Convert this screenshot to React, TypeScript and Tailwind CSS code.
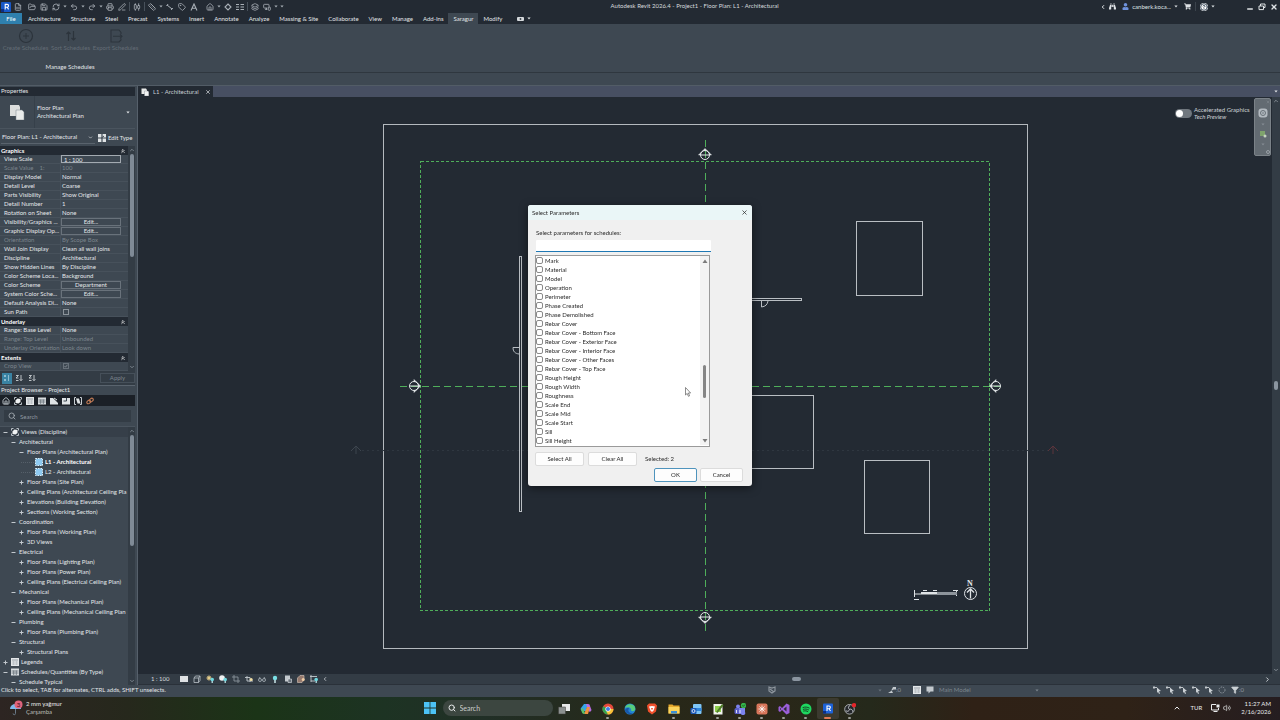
import React, { useState } from "react";
import {
  AlignHorizontalDistributeCenter,
  ChevronDown,
  ChevronLeft,
  ChevronRight,
  ChevronUp,
  ChevronsUp,
  CircleHelp,
  FileSpreadsheet,
  FolderOpen,
  Funnel,
  House,
  Layers,
  Minus,
  MonitorSmartphone,
  PenLine,
  Printer,
  Redo2,
  RefreshCw,
  Ruler,
  Save,
  Search,
  Tag,
  Undo2,
  Volume2,
  X,
} from "lucide-react";
import { FaBinoculars, FaShoppingCart, FaUser } from "react-icons/fa";

type IconType = React.ComponentType<{ className?: string; strokeWidth?: number }>;

const Caret = ({ className = "" }: { className?: string }) => (
  <svg viewBox="0 0 4 3" className={`h-[3px] w-1 shrink-0 ${className}`}>
    <path d="M0.4 0.5h3.2L2 2.5z" fill="currentColor" />
  </svg>
);

const Slot = ({ icon: Icon, label }: { icon: IconType; label: string }) => (
  <button aria-label={label} className="flex h-3 w-3 shrink-0 items-center justify-center text-[#a9b0b7]">
    <Icon className="size-2" strokeWidth={2.4} />
  </button>
);

const Drop = ({ label }: { label: string }) => (
  <button aria-label={label} className="flex h-3 w-[6px] shrink-0 items-center justify-center text-[#a9b0b7]">
    <Caret />
  </button>
);

const Rule = () => <span className="mx-[1px] h-[9px] w-px shrink-0 bg-[#48515b]" />;

const RevitLogo = () => (
  <svg viewBox="0 0 10 10" className="size-[10px]">
    <rect x="0" y="0" width="10" height="10" rx="1" fill="#1858c8" />
    <path d="M0 7h3v3H0z" fill="#0c2f86" />
    <path d="M4.2 7.4V2.4h1.9a1.4 1.4 0 0 1 0 2.9H4.2m2 0 1.4 2.1" fill="none" stroke="#fff" strokeWidth="1.1" />
  </svg>
);

function TitleBar() {
  return (
    <header className="flex h-[13px] shrink-0 items-center">
      <nav aria-label="Quick access" className="flex items-center">
        <span className="flex w-3 justify-center">
          <RevitLogo />
        </span>
        <Slot icon={FileSpreadsheet} label="Home" />
        <span className="w-[2px]" />
        <Slot icon={FolderOpen} label="Open" />
        <Slot icon={Save} label="Save" />
        <Slot icon={RefreshCw} label="Synchronize" />
        <Drop label="Synchronize options" />
        <Slot icon={Undo2} label="Undo" />
        <Drop label="Undo history" />
        <Slot icon={Redo2} label="Redo" />
        <Drop label="Redo history" />
        <Slot icon={Printer} label="Print" />
        <Slot icon={PenLine} label="Edit" />
        <Rule />
        <Slot icon={AlignHorizontalDistributeCenter} label="Measure" />
        <Rule />
        <Slot icon={Ruler} label="Dimension" />
        <Drop label="Dimension options" />
        <button aria-label="Aligned dimension" className="flex h-3 w-3 items-center justify-center text-[#a9b0b7]">
          <svg viewBox="0 0 8 8" className="size-2">
            <path d="M1 2l5 4M0.5 3l1.6-2M5.2 7l1.6-2" stroke="currentColor" fill="none" />
          </svg>
        </button>
        <Slot icon={Tag} label="Tag by category" />
        <button aria-label="Text" className="flex h-3 w-3 items-center justify-center text-[#a9b0b7]">
          <svg viewBox="0 0 8 8" className="size-2">
            <path d="M1 7.5 4 1l3 6.5M2.2 5.2h3.6" stroke="currentColor" fill="none" strokeWidth="1.1" />
          </svg>
        </button>
        <span className="w-1" />
        <Slot icon={House} label="Default 3D view" />
        <Drop label="3D view options" />
        <button aria-label="Section" className="flex h-3 w-3 items-center justify-center text-[#a9b0b7]">
          <svg viewBox="0 0 8 8" className="size-2">
            <path d="M4 1 7 4 4 7 1 4z" stroke="currentColor" fill="none" strokeWidth="1.1" />
          </svg>
        </button>
        <button aria-label="Thin lines" className="flex h-3 w-3 items-center justify-center text-[#a9b0b7]">
          <svg viewBox="0 0 8 8" className="size-2">
            <path d="M0 1.5h3M4.5 1.5H8M0 4h3M4.5 4H8M0 6.5h3M4.5 6.5H8" stroke="currentColor" />
          </svg>
        </button>
        <Rule />
        <Slot icon={Layers} label="Close inactive views" />
        <Slot icon={MonitorSmartphone} label="Switch windows" />
        <Drop label="Switch windows options" />
        <Drop label="Customize toolbar" />
      </nav>
      <h1 className="grow pb-[2px] pl-1 text-center leading-[8px] text-[#d6dade]">
        Autodesk Revit 2026.4 - Project1 - Floor Plan: L1 - Architectural
      </h1>
      <div className="flex items-center text-[#dfe3e6]">
        <ChevronLeft className="size-[6px]" strokeWidth={4} />
        <FaBinoculars className="ml-[3px] size-[7px]" />
        <FaUser className="ml-[6px] size-[7px] text-[#6f93dd]" />
        <button className="ml-[3px] flex items-center gap-[3px] text-[6px] leading-[8px]">
          canberk.koca...
          <Caret />
        </button>
        <FaShoppingCart className="ml-[6px] size-[7px]" />
        <span className="mx-[4px] h-[9px] w-px bg-[#3b434c]" />
        <CircleHelp className="size-2 rounded-full bg-white text-[#3b4a5a]" strokeWidth={3} />
        <Caret className="ml-[3px]" />
        <button aria-label="Minimize" className="ml-[31px] flex h-2 items-end">
          <Minus className="-mb-[2px] size-2" strokeWidth={4} />
        </button>
        <button aria-label="Restore" className="ml-[4px]">
          <svg viewBox="0 0 8 8" className="size-2">
            <path d="M2.5 3V1H7v3.5H5.5M1 3h4.5v3.6H1z" fill="none" stroke="currentColor" />
          </svg>
        </button>
        <button aria-label="Close" className="ml-[4px] mr-[2px]">
          <X className="size-2" strokeWidth={4} />
        </button>
      </div>
    </header>
  );
}

const ribbonTabs = [
  "Architecture", "Structure", "Steel", "Precast", "Systems", "Insert", "Annotate", "Analyze",
  "Massing & Site", "Collaborate", "View", "Manage", "Add-Ins", "Saragur", "Modify",
];

function RibbonTabs() {
  return (
    <nav aria-label="Ribbon tabs" className="flex h-[11px] shrink-0 items-stretch leading-[10px] text-[#e2e5e8]">
      <button className="mr-px w-[22px] bg-[#2f80ae] text-white">File</button>
      {ribbonTabs.map((t) => (
        <button key={t} className={t === "Saragur" ? "bg-[#3e4852] px-[5px]" : "px-[5px]"}>
          {t}
        </button>
      ))}
      <button aria-label="Ribbon display" className="ml-[10px] flex items-center gap-[3px]">
        <svg viewBox="0 0 7 4" className="h-1 w-[7px]">
          <rect width="7" height="4" rx="1" fill="#d5d9dc" />
          <circle cx="3.5" cy="2" r="0.9" fill="#3a424b" />
        </svg>
        <Caret />
      </button>
    </nav>
  );
}

function Ribbon() {
  return (
    <section aria-label="Ribbon" className="flex h-[49px] shrink-0 flex-col border-b border-[#2f373f] bg-[#3e4852]">
      <div className="flex gap-[3px] pl-[3px] pt-[4px] leading-[8px] text-[#646d76]">
        <button className="flex w-[45px] flex-col items-center whitespace-nowrap">
          <svg viewBox="0 0 16 16" className="size-4 text-[#2c343c]">
            <circle cx="8" cy="8" r="6.5" fill="none" stroke="currentColor" strokeWidth="1.2" />
            <path d="M8 5v6M5 8h6" stroke="currentColor" />
          </svg>
          Create Schedules
        </button>
        <button className="flex w-[39px] flex-col items-center whitespace-nowrap">
          <svg viewBox="0 0 16 16" className="size-4 text-[#2c343c]">
            <path d="M5.5 13V4M3.5 6l2-2 2 2M10.5 3v9M8.5 10l2 2 2-2" fill="none" stroke="currentColor" strokeWidth="1.2" />
          </svg>
          Sort Schedules
        </button>
        <button className="flex w-[45px] flex-col items-center whitespace-nowrap">
          <svg viewBox="0 0 16 16" className="size-4 text-[#2c343c]">
            <path d="M13 6V4.5L11 2H3v12h8l2-2v-1.5M5 8.3h9M12 6.3l2 2-2 2" fill="none" stroke="currentColor" strokeWidth="1.1" />
          </svg>
          Export Schedules
        </button>
      </div>
      <p className="mt-auto w-[140px] pb-[1px] text-center leading-[8px] text-[#e2e5e8]">Manage Schedules</p>
    </section>
  );
}

type Prop = { name: string; value?: string; kind?: "button" | "box" | "check"; off?: boolean; extra?: string };
const groups: { title: string; rows: Prop[] }[] = [
  {
    title: "Graphics",
    rows: [
      { name: "View Scale", value: "1 : 100", kind: "box" },
      { name: "Scale Value", extra: "1:", value: "100", off: true },
      { name: "Display Model", value: "Normal" },
      { name: "Detail Level", value: "Coarse" },
      { name: "Parts Visibility", value: "Show Original" },
      { name: "Detail Number", value: "1" },
      { name: "Rotation on Sheet", value: "None" },
      { name: "Visibility/Graphics ...", value: "Edit...", kind: "button" },
      { name: "Graphic Display Op...", value: "Edit...", kind: "button" },
      { name: "Orientation", value: "By Scope Box", off: true },
      { name: "Wall Join Display", value: "Clean all wall joins" },
      { name: "Discipline", value: "Architectural" },
      { name: "Show Hidden Lines", value: "By Discipline" },
      { name: "Color Scheme Loca...", value: "Background" },
      { name: "Color Scheme", value: "Department", kind: "button" },
      { name: "System Color Sche...", value: "Edit...", kind: "button" },
      { name: "Default Analysis Di...", value: "None" },
      { name: "Sun Path", kind: "check" },
    ],
  },
  {
    title: "Underlay",
    rows: [
      { name: "Range: Base Level", value: "None" },
      { name: "Range: Top Level", value: "Unbounded", off: true },
      { name: "Underlay Orientation", value: "Look down", off: true },
    ],
  },
  { title: "Extents", rows: [{ name: "Crop View", kind: "check", off: true }] },
];

function PropValue({ row }: { row: Prop }) {
  if (row.kind === "button")
    return <button className="block h-2 w-[60px] border border-[#69727b] text-center leading-[6px]">{row.value}</button>;
  if (row.kind === "box")
    return (
      <input
        aria-label={row.name}
        defaultValue={row.value}
        className="block h-2 w-[60px] border border-[#a3aab1] bg-transparent pl-[2px] leading-[6px] outline-none"
      />
    );
  if (row.kind === "check")
    return (
      <span className="relative ml-[2px] block size-[6px]">
        <input
          type="checkbox"
          aria-label={row.name}
          defaultChecked={row.off}
          disabled={row.off}
          className="block size-[6px] appearance-none border border-[#8b939a] disabled:border-[#68717a]"
        />
        {row.off && (
          <svg viewBox="0 0 6 6" className="pointer-events-none absolute inset-0 size-[6px]">
            <path d="M1.5 3l1 1.2 2-2.5" fill="none" stroke="#8b939a" strokeWidth="0.8" />
          </svg>
        )}
      </span>
    );
  return <span className="pl-px">{row.value}</span>;
}

function Scrollbar({ thumb }: { thumb: string }) {
  return (
    <div className="flex w-[7px] shrink-0 flex-col items-center bg-[#333c45] text-[#8f98a1]">
      <ChevronUp className="my-px size-[6px] shrink-0" strokeWidth={3} />
      <div className="flex min-h-0 w-full grow justify-center">
        <span className={`w-1 rounded-full bg-[#7f8a96] ${thumb}`} />
      </div>
      <ChevronDown className="my-px size-[6px] shrink-0" strokeWidth={3} />
    </div>
  );
}

function Properties() {
  return (
    <section aria-label="Properties" className="flex shrink-0 flex-col">
      <h2 className="mt-px h-[9px] bg-[#232a33] pl-px leading-[8px] text-[#e2e5e8]">Properties</h2>
      <div className="flex h-[33px] items-center border-b border-[#4a545e]">
        <span className="flex h-full w-[35px] items-center justify-center border-r border-[#36404a]">
          <svg viewBox="0 0 16 16" className="size-4">
            <path d="M1 1h9l1 2v9H1z" fill="#dcdedd" />
            <path d="M7 6h6l2 2v8H7z" fill="#e9ebea" stroke="#7b828a" strokeWidth="0.5" />
          </svg>
        </span>
        <p className="pl-[2px] leading-[8px]">
          Floor Plan
          <br />
          Architectural Plan
        </p>
        <Caret className="ml-auto mr-[5px]" />
      </div>
      <div className="flex h-[17px] items-center">
        <button className="ml-px flex h-[13px] w-[94px] items-center justify-between border-b border-[#59636d] pl-px pr-[2px]">
          Floor Plan: L1 - Architectural
          <ChevronDown className="size-[5px]" strokeWidth={3} />
        </button>
        <button className="ml-[3px] flex items-center gap-[2px]">
          <svg viewBox="0 0 8 8" className="size-2">
            <path d="M0 0h3.4v3.4H0zM4.6 0H8v3.4H4.6zM0 4.6h3.4V8H0zM4.6 4.6H8V8H4.6z" fill="#dfe3e5" />
            <path d="M3 4.5 6 2" stroke="#48525c" />
          </svg>
          Edit Type
        </button>
      </div>
      <div className="flex">
        <div className="min-w-0 grow">
          {groups.map((g) => (
            <React.Fragment key={g.title}>
              <h3 className="flex h-[9px] items-center justify-between bg-[#232a33] pl-[1px] pr-[2px] font-bold leading-[8px] text-white">
                {g.title}
                <ChevronsUp className="size-[6px]" strokeWidth={3} />
              </h3>
              <table className="w-full table-fixed border-collapse">
                <tbody>
                  {g.rows.map((r) => (
                    <tr key={r.name} className={r.off ? "h-[9px] text-[#7c858d]" : "h-[9px]"}>
                      <th scope="row" className="w-[61px] whitespace-nowrap p-0 pb-px pl-1 text-left font-normal leading-[8px] shadow-[inset_-1px_-1px_0_#47515b]">
                        {r.name}
                        {r.extra && <span className="pl-[6px]">{r.extra}</span>}
                      </th>
                      <td className="whitespace-nowrap p-0 pb-px leading-[8px] shadow-[inset_0_-1px_0_#47515b]">
                        <PropValue row={r} />
                      </td>
                    </tr>
                  ))}
                </tbody>
              </table>
            </React.Fragment>
          ))}
        </div>
        <Scrollbar thumb="h-[103px]" />
      </div>
      <div className="flex h-[15px] items-center gap-px border-b border-[#5a646e] bg-[#333c45] pl-[2px]">
        <button aria-label="Group by category" className="flex h-[11px] w-[10px] items-center justify-center bg-[#3a83a3]">
          <svg viewBox="0 0 8 8" className="size-2">
            <path d="M1 2h2M5 2h1M1 6h2M5 6h1M5 4h1" stroke="#e3f2f9" />
          </svg>
        </button>
        {["Sort ascending", "Sort descending"].map((l) => (
          <button key={l} aria-label={l} className="flex h-[11px] w-3 items-center justify-center">
            <svg viewBox="0 0 8 8" className="size-2">
              <path d="M1 1.5h2.5L1 4h2.5M1 6.5h2.5M6 1v5.5M4.6 5.2 6 6.7l1.4-1.5" fill="none" stroke="#ccd1d5" strokeWidth="0.9" />
            </svg>
          </button>
        ))}
        <button className="ml-auto h-[10px] w-[35px] border border-[#46505a] leading-[8px] text-[#7c858d]">Apply</button>
      </div>
    </section>
  );
}

const SheetGlyph = () => (
  <svg viewBox="0 0 8 8" className="size-2 shrink-0">
    <path d="M0.5 2.5v-2h2M5.5 0.5h2v2M7.5 5.5v2h-2M2.5 7.5h-2v-2" fill="none" stroke="#b9c0c6" />
    <path d="M3.5 1.5 6.5 2v3L4.5 6.5 1.5 6V3.2z" fill="#f1f3f4" />
  </svg>
);
const TableGlyph = () => (
  <svg viewBox="0 0 8 8" className="size-2 shrink-0">
    <path d="M0 0.5h8v7H0z" fill="#d8dcdf" />
    <path d="M0.5 3h7M0.5 5h7M2.7 2.5V7M5.3 2.5V7" stroke="#59636c" strokeWidth="0.7" />
  </svg>
);
const LegendGlyph = () => (
  <svg viewBox="0 0 8 8" className="size-2 shrink-0">
    <path d="M0 0h8v8H0z" fill="#e4e7e9" />
    <path d="M1 2h6M1.5 4h2M4.5 4h2M1.5 6h2M4.5 6h2" stroke="#77808a" strokeWidth="0.7" />
  </svg>
);
const PlanGlyph = () => (
  <svg viewBox="0 0 8 8" className="size-2 shrink-0">
    <rect x="0.5" y="0.5" width="7" height="7" fill="#8fcbf2" stroke="#d9eefb" strokeDasharray="1.5 1" />
  </svg>
);

type Node = { d: number; s: "-" | "+" | ""; t: string; icon?: React.ReactNode; bold?: boolean };
const tree: Node[] = [
  { d: 0, s: "-", t: "Views (Discipline)", icon: <SheetGlyph /> },
  { d: 1, s: "-", t: "Architectural" },
  { d: 2, s: "-", t: "Floor Plans (Architectural Plan)" },
  { d: 3, s: "", t: "L1 - Architectural", icon: <PlanGlyph />, bold: true },
  { d: 3, s: "", t: "L2 - Architectural", icon: <PlanGlyph /> },
  { d: 2, s: "+", t: "Floor Plans (Site Plan)" },
  { d: 2, s: "+", t: "Ceiling Plans (Architectural Ceiling Pla" },
  { d: 2, s: "+", t: "Elevations (Building Elevation)" },
  { d: 2, s: "+", t: "Sections (Working Section)" },
  { d: 1, s: "-", t: "Coordination" },
  { d: 2, s: "+", t: "Floor Plans (Working Plan)" },
  { d: 2, s: "+", t: "3D Views" },
  { d: 1, s: "-", t: "Electrical" },
  { d: 2, s: "+", t: "Floor Plans (Lighting Plan)" },
  { d: 2, s: "+", t: "Floor Plans (Power Plan)" },
  { d: 2, s: "+", t: "Ceiling Plans (Electrical Ceiling Plan)" },
  { d: 1, s: "-", t: "Mechanical" },
  { d: 2, s: "+", t: "Floor Plans (Mechanical Plan)" },
  { d: 2, s: "+", t: "Ceiling Plans (Mechanical Ceiling Plan" },
  { d: 1, s: "-", t: "Plumbing" },
  { d: 2, s: "+", t: "Floor Plans (Plumbing Plan)" },
  { d: 1, s: "-", t: "Structural" },
  { d: 2, s: "+", t: "Structural Plans" },
  { d: 0, s: "+", t: "Legends", icon: <LegendGlyph /> },
  { d: 0, s: "-", t: "Schedules/Quantities (By Type)", icon: <TableGlyph /> },
  { d: 1, s: "-", t: "Schedule Typical" },
];
const indents = ["pl-[3px]", "pl-[11px]", "pl-[19px]", "pl-[26px]"];

function ProjectBrowser() {
  return (
    <section aria-label="Project Browser" className="flex min-h-0 grow flex-col">
      <h2 className="h-[9px] shrink-0 pl-px leading-[8px] text-[#e2e5e8]">Project Browser - Project1</h2>
      <div className="flex h-[11px] shrink-0 items-center gap-1 bg-[#1b2027] pl-[2px]">
        <House className="size-2 text-[#b9c0c6]" strokeWidth={3} />
        <SheetGlyph />
        <LegendGlyph />
        <TableGlyph />
        <svg viewBox="0 0 8 8" className="size-2">
          <path d="M0 1h3l5 5v1.5H0z" fill="#dfe3e5" />
          <path d="M4 1l3 2" stroke="#dfe3e5" />
        </svg>
        <svg viewBox="0 0 8 8" className="size-2">
          <path d="M0 1h8v6.5H0z" fill="#dfe3e5" />
          <path d="M4.5 1v3H1.5" stroke="#3b444d" fill="none" />
        </svg>
        <svg viewBox="0 0 8 8" className="size-2">
          <path d="M2 0.5H0.5v7H2M6 0.5h1.5v7H6" fill="none" stroke="#c6ccd1" />
          <path d="M2 1.5h3l1.5 5h-3z" fill="#dfe3e5" />
        </svg>
        <svg viewBox="0 0 8 8" className="size-2">
          <g fill="none" stroke="#c07a55" strokeWidth="1.1">
            <ellipse cx="2.7" cy="5" rx="2" ry="1.5" transform="rotate(-40 2.7 5)" />
            <ellipse cx="5.4" cy="3" rx="2" ry="1.5" transform="rotate(-40 5.4 3)" />
          </g>
        </svg>
      </div>
      <div className="shrink-0 border-b border-[#4a545e] bg-[#3e4852] px-1 pb-[4px] pt-[4px]">
        <label className="flex h-3 items-center gap-1 bg-[#333c45] pl-1 text-[#aab1b8]">
          <Search className="size-2" strokeWidth={2.4} />
          <input
            placeholder="Search"
            aria-label="Search project browser"
            className="h-[10px] min-w-0 grow bg-transparent outline-none placeholder:text-[#9199a1]"
          />
        </label>
      </div>
      <div className="flex min-h-0 grow">
        <ul className="min-h-0 min-w-0 grow basis-0 overflow-hidden">
          {tree.map((n, i) => (
            <li
              key={i}
              className={`flex h-[10px] items-center whitespace-nowrap leading-[10px] ${indents[n.d]} ${i === 0 ? "bg-[#363f49]" : ""}`}
            >
              {n.s ? (
                <svg viewBox="0 0 5 5" className="mr-[3px] size-[5px] shrink-0">
                  <path d={n.s === "-" ? "M0.5 2.5h4" : "M0.5 2.5h4M2.5 0.5v4"} stroke="#c3c9ce" />
                </svg>
              ) : (
                <span className="ml-[-5px] mr-px w-[13px] shrink-0 border-b border-dotted border-[#56606a]" />
              )}
              {n.icon && <span className="mr-[2px]">{n.icon}</span>}
              <span className={n.bold ? "font-bold text-white" : ""}>{n.t}</span>
            </li>
          ))}
        </ul>
        <Scrollbar thumb="h-[111px]" />
      </div>
    </section>
  );
}

const Elevation = ({ x, y, points }: { x: number; y: number; points: string }) => (
  <g transform={`translate(${x} ${y})`} stroke="#e4e8ea" fill="none" strokeWidth="1">
    <circle r="4.5" />
    <path d="M-4 0h8" />
    <path d={points} fill="#e4e8ea" strokeWidth="0.5" />
  </g>
);

function Drawing() {
  return (
    <svg role="img" aria-label="Floor plan L1" viewBox="138 97 1134 577" preserveAspectRatio="xMidYMid meet" className="absolute inset-0 size-full">
      <g fill="none" shapeRendering="crispEdges">
        <rect x="383.5" y="124.5" width="644" height="524" stroke="#b4b9be" />
        <rect x="420.5" y="161.5" width="569" height="449" stroke="#4fae5a" strokeDasharray="3 2" />
        <path d="M705.5 140V632" stroke="#4fae5a" strokeDasharray="7 4" />
        <path d="M400 386.5H1004" stroke="#4fae5a" strokeDasharray="7 4" />
        <path d="M362 450.5H1048" stroke="#2f3740" strokeDasharray="2 3" />
        <g stroke="#b9bec3">
          <rect x="856.5" y="221.5" width="66" height="74" />
          <rect x="864.5" y="460.5" width="65" height="73" />
          <rect x="740.5" y="395.5" width="73" height="73" />
          <path d="M519.5 256v255h2V256zM740 298.5h61v2h-61" />
        </g>
      </g>
      <g fill="none" stroke="#b9bec3">
        <path d="M519 347.5h-6c0 4 2 6 6 6.5M761.5 301v6c4-.5 6-2.5 6.5-6" />
        <path d="M351 451l5-5 5 5M356 446v8" stroke="#3d454e" />
        <path d="M1048 451l5-5 5 5M1053 446v8" stroke="#5c343c" />
      </g>
      <Elevation x={705} y={155} points="M-6.5 0 0 -6.5 6.5 0 4.5 0A4.5 4.5 0 0 0 -4.5 0z" />
      <Elevation x={705} y={617} points="M-6.5 0 0 6.5 6.5 0 4.5 0A4.5 4.5 0 0 1 -4.5 0z" />
      <Elevation x={414} y={386} points="M0 -6.5 6.5 0 0 6.5 0 4.5A4.5 4.5 0 0 0 0 -4.5z" />
      <Elevation x={996} y={386} points="M0 -6.5 -6.5 0 0 6.5 0 4.5A4.5 4.5 0 0 1 0 -4.5z" />
      <g stroke="#dfe3e6" fill="none">
        <circle cx="970.5" cy="593.5" r="6" />
        <path d="M970.5 598.5v-9M967 592.5l3.5-3.5 3.5 3.5" strokeWidth="1.3" />
        <path d="M914.5 590v7M914 594h43M923 590.5h4M933 590.5h4M953 590.5h5M956.5 591v5M914 599.5h5" />
        <path d="M921 593h16" strokeWidth="2" />
        <path d="M937 593.5h20" strokeWidth="3" stroke="#8d949b" />
      </g>
      <text x="970" y="585.5" textAnchor="middle" fill="#e4e8ea" fontSize="8" fontWeight="bold" fontFamily="'Liberation Serif', serif">
        N
      </text>
    </svg>
  );
}

const Bulb = () => (
  <>
    <circle cx="6.2" cy="4.5" r="1.8" fill="#6fd8e0" />
    <path d="M6.2 6v2" stroke="#bfeef2" strokeWidth="1.2" />
  </>
);

const viewControls: { label: string; art: React.ReactNode }[] = [
  { label: "Detail level", art: <path d="M0 1h8v6H0z" fill="#dfe2e4" /> },
  { label: "Visual style", art: <path d="M1 3h4.5v4.5H1zM1 3l1.5-2H7v4.5l-1.5 2M5.5 3 7 1" fill="none" stroke="#b9c0c6" strokeWidth="0.8" /> },
  { label: "Sun path", art: <><circle cx="3" cy="3" r="1.7" fill="#f0dfa6" /><path d="M3 0v6M0 3h6M1 1l4 4M5 1 1 5" stroke="#e3c77f" strokeWidth="0.6" /><Bulb /></> },
  { label: "Shadows", art: <><circle cx="3" cy="3" r="2.8" fill="#f0f2f3" /><Bulb /></> },
  { label: "Crop view", art: <path d="M2 0v6h6M0 2h6v6" fill="none" stroke="#89929a" strokeWidth="0.9" /> },
  { label: "Show crop region", art: <><path d="M2 1v5h6M0 2.5h5V7" fill="none" stroke="#c3c9ce" strokeWidth="0.9" /><circle cx="6.2" cy="4.5" r="1.5" fill="#f0dfa6" /></> },
  { label: "Temporary hide", art: <path d="M0.5 5a1.5 1.5 0 1 0 3 0 1.5 1.5 0 1 0-3 0M4.5 5a1.5 1.5 0 1 0 3 0 1.5 1.5 0 1 0-3 0M1 4l1-2M7 4 6 2" fill="none" stroke="#a2aab1" strokeWidth="0.9" /> },
  { label: "Reveal hidden elements", art: <><circle cx="4" cy="3" r="2.2" fill="#7be0e6" /><path d="M4 5v3" stroke="#d5f3f5" strokeWidth="1.4" /></> },
  { label: "Temporary view properties", art: <><path d="M1 0.5h5v6H1z" fill="#c3c9ce" /><path d="M4 4h3.5v3.5H4z" fill="#6a737c" stroke="#dfe3e5" strokeWidth="0.6" /></> },
  { label: "Analytical model", art: <><path d="M0.5 3 3 0.5h4V5L5 7.5H0.5z" fill="#94796d" stroke="#c8b7ae" strokeWidth="0.7" /><circle cx="6.2" cy="4.5" r="1.5" fill="#f0cda6" /></> },
  { label: "Reveal constraints", art: <><path d="M1 0v7M0 1.5h7M1 6h4" stroke="#c3c9ce" strokeWidth="0.9" /><Bulb /></> },
];

function Workspace() {
  return (
    <main className="flex min-w-0 grow flex-col border-l border-[#56606b] bg-[#232a33]">
      <div className="flex h-[11px] shrink-0 items-center bg-[#474f62]">
        <button className="flex h-full w-[75px] items-center gap-1 whitespace-nowrap bg-[#232a33] pl-[3px] leading-[10px] text-[#c9ced3]">
          <svg viewBox="0 0 8 8" className="size-2 shrink-0">
            <path d="M0.5 0.5H5L6 2v4H0.5z" fill="#e9ebea" />
            <path d="M3.5 3H7l.8 1v4H3.5z" fill="#f4f5f5" stroke="#7b828a" strokeWidth="0.4" />
          </svg>
          L1 - Architectural
          <X className="ml-auto mr-[2px] size-[6px] shrink-0" strokeWidth={3} />
        </button>
        <Caret className="ml-auto mr-[2px]" />
      </div>
      <div className="flex min-h-0 grow">
        <div className="relative min-w-0 grow">
          <Drawing />
          <div className="absolute right-px top-px flex items-start gap-px">
            <label className="mt-[8px] flex items-center gap-[2px] leading-[7px] text-[#cfd3d7]">
              <span className="relative block h-[9px] w-[17px]">
                <input type="checkbox" role="switch" className="block h-[9px] w-[17px] appearance-none rounded-full bg-[#70777e]" />
                <span className="pointer-events-none absolute left-px top-px size-[7px] rounded-full bg-white" />
              </span>
              <span className="w-[59px]">
                Accelerated Graphics
                <br />
                <i>Tech Preview</i>
              </span>
            </label>
            <div className="flex h-[58px] w-[17px] flex-col items-center justify-between rounded-[2px] border border-[#7b8288] bg-[#636b72] py-px">
              <X className="size-1 self-end text-[#9aa1a7]" />
              <svg viewBox="0 0 10 10" className="size-[10px]">
                <rect x="0.5" y="0.5" width="9" height="9" rx="3" fill="#b3bac0" />
                <circle cx="5" cy="5" r="2.5" fill="none" stroke="#697178" />
                <circle cx="5" cy="5" r="0.8" fill="#697178" />
              </svg>
              <Caret className="text-[#858c93]" />
              <svg viewBox="0 0 8 8" className="size-2">
                <path d="M1 1h5v5H1z" fill="#7fa36d" />
                <circle cx="6" cy="6" r="1.5" fill="#c6d3c1" />
              </svg>
              <Caret className="text-[#858c93]" />
              <span className="size-1 self-end rounded-full border border-[#9aa1a7]" />
            </div>
          </div>
        </div>
        <div className="flex w-2 shrink-0 flex-col items-center justify-between bg-[#333c45] text-[#9aa2aa]">
          <ChevronUp className="mt-px size-[6px]" strokeWidth={3} />
          <span className="h-[9px] w-1 rounded-full bg-[#8b95a0]" />
          <ChevronDown className="mb-px size-[6px]" strokeWidth={3} />
        </div>
      </div>
      <div className="flex h-[11px] shrink-0 items-center border-b border-[#2a3139] bg-[#333c45] text-[#d6dade]">
        <span className="w-[39px] pl-[13px] leading-[10px]">1 : 100</span>
        {viewControls.map((v) => (
          <button key={v.label} aria-label={v.label} className="flex h-[10px] w-[13px] items-center justify-center">
            <svg viewBox="0 0 8 8" className="size-2">
              {v.art}
            </svg>
          </button>
        ))}
        <ChevronLeft className="ml-[2px] size-[6px]" strokeWidth={3} />
        <div className="flex grow justify-center">
          <span className="h-1 w-[9px] rounded-full bg-[#8b95a0]" />
        </div>
        <ChevronRight className="mr-[9px] size-[7px]" strokeWidth={3} />
      </div>
    </main>
  );
}

function StatusBar() {
  return (
    <footer className="flex h-[12px] shrink-0 items-center bg-[#3e4852] pb-[2px] leading-[8px] text-[#e2e5e8]">
      <p className="grow pl-px">Click to select, TAB for alternates, CTRL adds, SHIFT unselects.</p>
      <svg viewBox="0 0 8 8" className="size-2 text-[#8d959d]">
        <path d="M1 1l3 1 3-1v4L4 7 1 5zM2 3l4 3" fill="none" stroke="currentColor" strokeWidth="1.2" />
      </svg>
      <Caret className="ml-[102px] text-[#69727b]" />
      <svg viewBox="0 0 8 8" className="ml-[6px] size-2">
        <path d="M0 7h5L3.5 4 5 1h3v2.5H5.5" fill="#c3c9ce" />
      </svg>
      <span className="text-[#8d959d]">:0</span>
      <span className="ml-3 flex gap-[5px]">
        <LegendGlyph />
        <svg viewBox="0 0 8 8" className="size-2">
          <path d="M0.5 0.5h7v5h-3l-2 2v-2h-2z" fill="#c3c9ce" />
        </svg>
      </span>
      <button className="ml-[5px] flex w-[100px] items-center justify-between text-[#7c858d]">
        Main Model
        <Caret />
      </button>
      <div className="ml-[114px] flex items-center gap-[5px] text-[#ccd1d5]">
        {["Select links", "Select underlay elements", "Select pinned elements", "Select elements by face", "Drag elements on selection"].map((l) => (
          <button key={l} aria-label={l} className="flex items-center justify-center">
            <svg viewBox="0 0 8 8" className="size-2">
              <path d="M0 1.5h4M1 0v3" stroke="currentColor" strokeWidth="0.9" />
              <path d="M4 1.5 8 5 6 5.2 7 7.5 6 8 5 5.8 4 7z" fill="currentColor" />
            </svg>
          </button>
        ))}
        <svg viewBox="0 0 8 8" className="size-2">
          <circle cx="4" cy="4" r="3" fill="none" stroke="#8d959d" strokeDasharray="1.5 1" />
        </svg>
        <span className="flex items-center">
          <Funnel className="size-2 fill-current" />
          <span className="text-[#8d959d]">:0</span>
        </span>
      </div>
      <span className="w-[36px]" />
    </footer>
  );
}

const taskApps: { label: string; running?: boolean; active?: boolean; art: React.ReactNode }[] = [
  { label: "Task view", art: <><rect x="4" y="1" width="8" height="7" fill="#e8eaea" /><rect x="0.5" y="4" width="7" height="7" fill="#8b908f" stroke="#3a3a36" strokeWidth="0.5" /></> },
  { label: "Copilot", art: <><path d="M4 1h4l-2 7H2.5A2 2 0 0 1 1 5z" fill="#35a5e8" /><path d="M8 1a2 2 0 0 1 2 2l1.5 4A2 2 0 0 1 9 8.5L7 4 6 1z" fill="#b86ae0" /><path d="M4 11h4l2-7H7z" fill="#f0923f" /><path d="M1 6l2-1 2 5-1 1c-2 0-2.5-3-3-5z" fill="#5ac06a" /></> },
  { label: "Chrome", running: true, art: <><circle cx="6" cy="6" r="5.5" fill="#e5483a" /><path d="M6 6 1.2 3.2A5.5 5.5 0 0 0 6 11.5z" fill="#33a350" /><path d="M6 6h5.5A5.5 5.5 0 0 1 6 11.5L4.5 9z" fill="#f6c338" /><circle cx="6" cy="6" r="2.6" fill="#fff" /><circle cx="6" cy="6" r="2" fill="#3f7de8" /></> },
  { label: "Edge", art: <><circle cx="6" cy="6" r="5.5" fill="#2383d2" /><path d="M1 5a5.3 5.3 0 0 1 10.3 1c0 2-3 3-4.3 1.5C8 5 4 3 1 5z" fill="#56cc7c" /><path d="M5 5.5C3 8 5.5 11 9.5 10A5.5 5.5 0 0 1 1 8c0-3 3-3.5 4-2.5z" fill="#1857a8" /></> },
  { label: "Brave", art: <><path d="M3 0.5h6l2 2-1 6L6 11.5 2 8.5l-1-6z" fill="#f0502c" /><path d="M3 3.5 6 3l3 .5-1.5 4L6 9 4.5 7.5z" fill="#fff" /><path d="M5 5l1 2.5L7 5z" fill="#f0502c" /></> },
  { label: "File Explorer", running: true, art: <><path d="M0.5 1.5h4l1 1h6v8h-11z" fill="#e6a92d" /><path d="M0.5 4h11v6.5h-11z" fill="#fbd45c" /><path d="M3 8h6v2.5H3z" fill="#3c8fd6" /></> },
  { label: "Outlook", art: <><rect x="3" y="1" width="8.5" height="10" rx="1" fill="#7ec5f5" /><path d="M3 5h8.5v3H3z" fill="#2f86dc" /><rect x="0.5" y="5" width="6" height="6" rx="1" fill="#1b58b7" /><circle cx="3.5" cy="8" r="1.5" fill="none" stroke="#fff" strokeWidth="0.8" /></> },
  { label: "Notepad++", running: true, art: <><path d="M1.5 1h9v10.5h-9z" fill="#f1f3ec" /><path d="M3 3h6v6H3z" fill="#8fce4c" /><path d="M4 9l6-8 1.5 1.5L5.5 10z" fill="#4f7d2a" /></> },
  { label: "Teams", running: true, art: <><circle cx="4" cy="3.5" r="2" fill="#7c83ee" /><rect x="0.5" y="5" width="8" height="6" rx="1.5" fill="#5b5fc7" /><path d="M5 5h6v4a2 2 0 0 1-4 2H5z" fill="#7c83ee" /><path d="M2.5 7v3M6 7v3" stroke="#fff" strokeWidth="0.8" /><circle cx="9.5" cy="2.5" r="2.7" fill="#35b34a" /><path d="M8.4 2.5l.9.9 1.5-1.7" stroke="#10351a" strokeWidth="0.7" fill="none" /></> },
  { label: "Claude", running: true, art: <><rect x="0.5" y="0.5" width="11" height="11" rx="2" fill="#d8765a" /><path d="M6 2.5v7M2.5 6h7M3.5 3.5l5 5M8.5 3.5l-5 5" stroke="#fff" strokeWidth="0.8" /></> },
  { label: "Visual Studio", running: true, art: <><path d="M8.5 0.5 11.5 2v8l-3 1.5L4 7 2 9 .5 8V4L2 3l2 2z" fill="#9b5fd8" /><path d="M8.5 3.5v5L5.5 6zM2 4.8v2.4L3.2 6z" fill="#30283a" /></> },
  { label: "Spotify", running: true, art: <><circle cx="6" cy="6" r="5.5" fill="#1ed760" /><path d="M3 4.5c2-.8 4.5-.5 6.2.5M3.3 6.3c1.8-.6 3.7-.3 5.2.5M3.6 8c1.5-.4 3-.2 4.2.5" fill="none" stroke="#123a1e" strokeWidth="0.9" strokeLinecap="round" /></> },
  { label: "Revit", running: true, active: true, art: <><rect x="1" y="0.5" width="10" height="10" rx="1" fill="#1d62d8" /><path d="M1 8h3v2.5H1z" fill="#0c2f86" /><path d="M5 8V3h2a1.3 1.3 0 0 1 0 2.7H5m2 0L8.5 8" fill="none" stroke="#fff" strokeWidth="1.1" /></> },
  { label: "OBS", running: true, art: <><circle cx="5.5" cy="6.3" r="4.8" fill="#23262a" stroke="#c9cdd0" strokeWidth="0.8" /><path d="M5.5 6.3c-1.5-1-1.5-3 .5-3.8M5.5 6.3c-.2 1.8-2 2.6-3.6 1.5M5.5 6.3c1.7-.7 3.3.5 3.1 2.4" stroke="#c9cdd0" strokeWidth="0.9" fill="none" /><circle cx="10" cy="2.2" r="2.2" fill="#e5252a" /></> },
];

function Taskbar() {
  return (
    <footer className="grid h-[23px] shrink-0 grid-cols-[1fr_auto_1fr] items-center bg-[linear-gradient(90deg,#2d2522_0%,#26281c_10%,#1b3417_20%,#1d3323_30%,#212f26_38%,#272819_50%,#2a2718_60%,#25291b_68%,#2f2116_76%,#2f2217_88%,#251d20_100%)] text-[#e9ebec]">
      <div className="flex items-center gap-[3px] pb-[2px] pl-[9px]">
        <svg viewBox="0 0 14 16" className="h-4 w-[14px]">
          <path d="M1 9a5.5 5 0 0 1 11 0z" fill="#7db9ec" />
          <path d="M6.5 9v4.5a1.2 1.2 0 0 1-2.4 0" fill="none" stroke="#6b7a88" />
          <circle cx="9.5" cy="4.5" r="4" fill="#e0637c" />
          <text x="9.5" y="6.7" textAnchor="middle" fontSize="6" fill="#3a1019">3</text>
        </svg>
        <p>
          2 mm yağmur
          <br />
          <span className="text-[#b9bbb8]">Çarşamba</span>
        </p>
      </div>
      <nav aria-label="Taskbar" className="flex items-center pb-px pl-1">
        <button aria-label="Start" className="mr-[7px]">
          <svg viewBox="0 0 12 12" className="size-3">
            <path d="M0 0h5.6v5.6H0zM6.4 0H12v5.6H6.4zM0 6.4h5.6V12H0zM6.4 6.4H12V12H6.4z" fill="#4cc3f5" />
          </svg>
        </button>
        <label className="flex h-4 w-[110px] items-center gap-1 rounded-full bg-[#3c4640] pl-[5px]">
          <Search className="size-2" strokeWidth={3} />
          <input placeholder="Search" aria-label="Search Windows" className="min-w-0 grow bg-transparent text-[7px] leading-[9px] outline-none placeholder:text-[#c9ccca]" />
        </label>
        {taskApps.map((a) => (
          <button
            key={a.label}
            aria-label={a.label}
            className={`flex h-[21px] w-[22px] flex-col items-center justify-end rounded-[2px] ${a.active ? "bg-[#3b3a2f]" : ""}`}
          >
            <svg viewBox="0 0 12 12" className="mb-[2px] size-3">
              {a.art}
            </svg>
            <span className={`h-[2px] rounded-full ${a.active ? "w-[7px] bg-[#e07a55]" : a.running ? "w-[3px] bg-[#9c9e99]" : "w-[3px]"}`} />
          </button>
        ))}
      </nav>
      <div className="flex items-center justify-end pb-[2px] pr-[9px]">
        <ChevronUp className="size-2" strokeWidth={3} />
        <span className="ml-[9px]">TUR</span>
        <svg viewBox="0 0 9 8" className="ml-[9px] h-2 w-[9px]">
          <path d="M5 0.5H0.5v5.5h7V4M2.5 7.5h4" fill="none" stroke="currentColor" />
          <rect x="5.5" y="0.5" width="3" height="3" fill="currentColor" />
        </svg>
        <Volume2 className="ml-[3px] size-2" strokeWidth={2} />
        <p className="ml-[10px] text-right">
          11:27 AM
          <br />
          2/16/2026
        </p>
      </div>
    </footer>
  );
}

const parameters = [
  "Mark", "Material", "Model", "Operation", "Perimeter", "Phase Created", "Phase Demolished", "Rebar Cover",
  "Rebar Cover - Bottom Face", "Rebar Cover - Exterior Face", "Rebar Cover - Interior Face", "Rebar Cover - Other Faces",
  "Rebar Cover - Top Face", "Rough Height", "Rough Width", "Roughness", "Scale End", "Scale Mid", "Scale Start", "Sill", "Sill Height",
];

function SelectParameters() {
  const [picked, setPicked] = useState<string[]>([]);
  const toggle = (p: string) => setPicked((s) => (s.includes(p) ? s.filter((q) => q !== p) : [...s, p]));
  const btn = "h-[14px] rounded-[2px] border bg-[#fdfdfd] leading-[12px]";
  return (
    <div className="pointer-events-none fixed inset-0 flex items-start justify-center pt-[205px]">
      <div role="dialog" aria-labelledby="dlg-title" className="pointer-events-auto relative w-[224px] overflow-hidden rounded-[3px] bg-[#f0f0f0] pb-[4px] text-[#2b2b2b] shadow-[0_2px_8px_rgba(0,0,0,0.5)]">
        <div className="flex h-[15px] items-center justify-between bg-[#eaf6f7] pl-[4px] pr-1">
          <h2 id="dlg-title" className="leading-[8px]">Select Parameters</h2>
          <button aria-label="Close">
            <X className="size-[7px]" strokeWidth={2.5} />
          </button>
        </div>
        <div className="px-2">
          <label htmlFor="filter" className="block pb-px pt-[9px] leading-[8px]">
            Select parameters for schedules:
          </label>
          <input id="filter" className="mt-[2px] block h-3 w-[175px] rounded-t-[1px] border-b border-[#1f78b4] bg-white px-1 outline-none" />
        </div>
        <div className="ml-[7px] mt-[3px] flex w-[175px] border border-[#9a9a9a] bg-white pb-px">
          <ul className="grow">
            {parameters.map((p) => (
              <li key={p} className="h-[9px]">
                <label className="flex h-[9px] items-center gap-[2px] leading-[9px]">
                  <input
                    type="checkbox"
                    checked={picked.includes(p)}
                    onChange={() => toggle(p)}
                    className="size-[7px] shrink-0 appearance-none rounded-[2px] border border-[#8a8a8a] bg-white checked:bg-[#2a7aa8]"
                  />
                  {p}
                </label>
              </li>
            ))}
          </ul>
          <div className="flex w-[9px] flex-col items-center bg-[#f3f3f3] text-[#7b7b7b]">
            <svg viewBox="0 0 6 4" className="mt-[3px] h-1 w-[6px]">
              <path d="M0.5 4 3 0.5 5.5 4z" fill="currentColor" />
            </svg>
            <div className="flex grow flex-col pt-[102px]">
              <span className="h-[33px] w-[3px] rounded-full bg-[#858585]" />
            </div>
            <svg viewBox="0 0 6 4" className="mb-[2px] h-1 w-[6px]">
              <path d="M0.5 0 3 3.5 5.5 0z" fill="currentColor" />
            </svg>
          </div>
        </div>
        <div className="flex items-center pl-[7px] pt-[5px]">
          <button className={`${btn} w-[49px] border-[#dcdcdc]`}>Select All</button>
          <button className={`${btn} ml-1 w-[49px] border-[#dcdcdc]`}>Clear All</button>
          <span className="ml-2 leading-[8px]">Selected: {picked.length + 2}</span>
        </div>
        <div className="flex justify-end gap-[3px] pr-[9px] pt-[2px]">
          <button className={`${btn} w-[43px] border-[#4f94bd]`}>OK</button>
          <button className={`${btn} w-[43px] border-[#dcdcdc]`}>Cancel</button>
        </div>
        <svg viewBox="0 0 6 10" className="pointer-events-none absolute left-[157px] top-[182px] h-[10px] w-[6px]">
          <path d="M0.5 0.5v7.5l1.7-1.6 1.2 2.9 1.2-.5-1.2-2.8h2.2z" fill="#fff" stroke="#5c5c5c" strokeWidth="0.7" />
        </svg>
      </div>
    </div>
  );
}

export default function App() {
  return (
    <div className="flex h-screen flex-col overflow-hidden bg-[#232a33] font-['Lato','Noto_Sans',sans-serif] text-[6px] leading-[8px] text-[#e4e7ea]">
      <TitleBar />
      <RibbonTabs />
      <Ribbon />
      <div aria-label="Options bar" className="h-[13px] shrink-0 border-b border-[#525c66] bg-[#3e4852]" />
      <div className="flex min-h-0 grow">
        <aside className="flex w-[137px] shrink-0 flex-col overflow-hidden bg-[#3e4852] pr-[2px]">
          <Properties />
          <ProjectBrowser />
        </aside>
        <Workspace />
      </div>
      <StatusBar />
      <Taskbar />
      <SelectParameters />
    </div>
  );
}
